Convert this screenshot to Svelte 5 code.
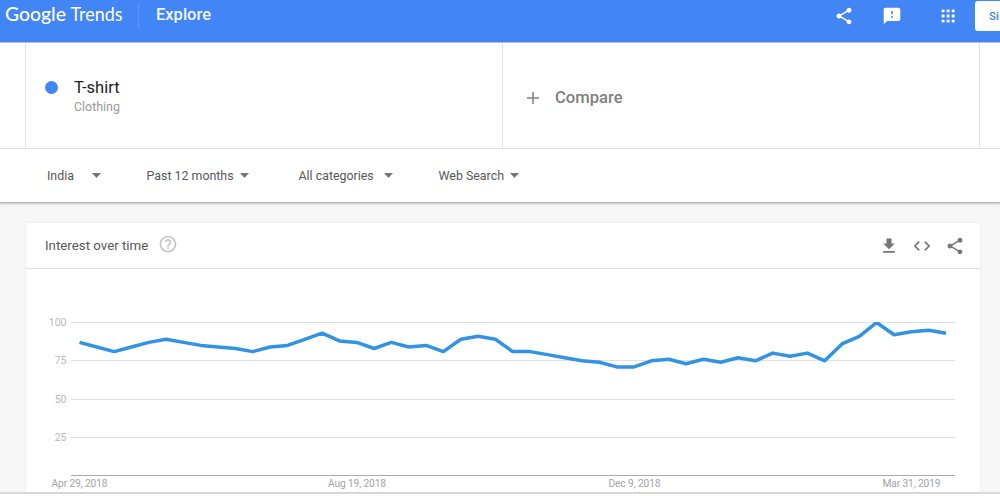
<script>
  const filters = [
    { label: 'India', width: 99.5, gap: 18 },
    { label: 'Past 12 months', width: 152, gap: 6 },
    { label: 'All categories', width: 140, gap: 10 },
    { label: 'Web Search', width: 100, gap: 6 }
  ];

  const values = [
    87, 84, 81, 84, 87, 89, 87, 85, 84, 83, 81, 84, 85, 89, 93, 88, 87,
    83, 87, 84, 85, 81, 89, 91, 89, 81, 81, 79, 77, 75, 74, 71, 71, 75,
    76, 73, 76, 74, 77, 75, 80, 78, 80, 75, 86, 91, 100, 92, 94, 95, 93
  ];

  const ticks = [100, 75, 50, 25];
  const dates = [
    { text: 'Apr 29, 2018', x: 25.5, width: 56 },
    { text: 'Aug 19, 2018', x: 302, width: 58 },
    { text: 'Dec 9, 2018', x: 582.5, width: 52 },
    { text: 'Mar 31, 2019', x: 856.5, width: 58 }
  ];

  const toY = (value) => 206.5 - value * 1.53;
  const points = values.map((v, i) => `${(53.5 + i * 17.33).toFixed(1)},${toY(v).toFixed(1)}`).join(' ');
</script>

{#snippet share(size)}
  <svg width={size} height={size} viewBox="0 0 24 24" fill="currentColor">
    <path d="M18 16.08c-.76 0-1.44.3-1.96.77L8.91 12.7c.05-.23.09-.46.09-.7s-.04-.47-.09-.7l7.05-4.11c.54.5 1.25.81 2.04.81 1.66 0 3-1.34 3-3s-1.34-3-3-3-3 1.34-3 3c0 .24.04.47.09.7L8.04 9.81C7.5 9.31 6.79 9 6 9c-1.66 0-3 1.34-3 3s1.34 3 3 3c.79 0 1.5-.31 2.04-.81l7.12 4.16c-.05.21-.08.43-.08.65 0 1.61 1.31 2.92 2.92 2.92s2.92-1.31 2.92-2.92-1.31-2.92-2.92-2.92z" />
  </svg>
{/snippet}

<div class="page">
  <header class="topbar">
    <svg class="logo" width="124" height="30" viewBox="0 0 124 30" fill="currentColor">
      <text class="google" x="5" y="21" textLength="61" lengthAdjust="spacingAndGlyphs">Google</text>
      <text class="trends" x="70.5" y="21" textLength="52" lengthAdjust="spacingAndGlyphs">Trends</text>
    </svg>
    <span class="divider"></span>
    <span class="section">Explore</span>
    <div class="actions">
      {@render share(20)}
      <svg class="feedback" width="20" height="20" viewBox="0 0 24 24" fill="currentColor">
        <path d="M20 2H4c-1.1 0-1.99.9-1.99 2L2 22l4-4h14c1.1 0 2-.9 2-2V4c0-1.1-.9-2-2-2zm-7 12h-2v-2h2v2zm0-4h-2V6h2v4z" />
      </svg>
      <svg class="apps" width="20" height="20" viewBox="0 0 24 24" fill="currentColor">
        <path d="M4.4 7.6h3.4V4.2H4.4v3.4zm6 12.2h3.4v-3.4h-3.4v3.4zm-6 0h3.4v-3.4H4.4v3.4zm0-6.1h3.4v-3.4H4.4v3.4zm6 0h3.4v-3.4h-3.4v3.4zm6.1-9.5v3.4h3.4V4.2h-3.4zm-6.1 3.4h3.4V4.2h-3.4v3.4zm6.1 6.1h3.4v-3.4h-3.4v3.4zm0 6.1h3.4v-3.4h-3.4v3.4z" />
      </svg>
      <button class="signin">Si</button>
    </div>
  </header>

  <section class="terms">
    <div class="term">
      <span class="dot"></span>
      <div>
        <div class="name">T-shirt</div>
        <div class="type">Clothing</div>
      </div>
    </div>
    <div class="compare">
      <svg width="12" height="12" viewBox="0 0 12 12" stroke="currentColor" stroke-width="1.5">
        <path d="M6 0v12M0 6h12" />
      </svg>
      <span>Compare</span>
    </div>
  </section>

  <nav class="filters">
    {#each filters as filter}
      <div class="filter" style="width: {filter.width}px; gap: {filter.gap}px">
        <span>{filter.label}</span>
        <svg width="9" height="5" viewBox="0 0 10 5" preserveAspectRatio="none" fill="currentColor"><path d="M0 0h10L5 5z" /></svg>
      </div>
    {/each}
  </nav>

  <main>
    <div class="card">
      <div class="card-header">
        <h2>Interest over time</h2>
        <svg class="help" width="20" height="20" viewBox="0 0 24 24" fill="currentColor">
          <path d="M11 18h2v-2h-2v2zm1-16C6.48 2 2 6.48 2 12s4.48 10 10 10 10-4.48 10-10S17.52 2 12 2zm0 18c-4.41 0-8-3.59-8-8s3.59-8 8-8 8 3.59 8 8-3.59 8-8 8zm0-14c-2.21 0-4 1.79-4 4h2c0-1.1.9-2 2-2s2 .9 2 2c0 2-3 1.75-3 5h2c0-2.25 3-2.5 3-5 0-2.21-1.79-4-4-4z" />
        </svg>
        <div class="tools">
          <svg width="20" height="20" viewBox="0 0 24 24" fill="currentColor">
            <path d="M19 9h-4V3H9v6H5l7 7 7-7zM5 18v2h14v-2H5z" />
          </svg>
          <svg width="20" height="20" viewBox="0 0 24 24" fill="currentColor">
            <path d="M9.4 16.6L4.8 12l4.6-4.6L8 6l-6 6 6 6 1.4-1.4zm5.2 0l4.6-4.6-4.6-4.6L16 6l6 6-6 6-1.4-1.4z" />
          </svg>
          {@render share(20)}
        </div>
      </div>

      <svg class="chart" width="954" height="223" viewBox="0 0 954 223">
        <clipPath id="plot"><rect x="45" y="53" width="885" height="160" /></clipPath>
        {#each ticks as tick}
          <line class="grid" x1="45" x2="929" y1={Math.floor(toY(tick)) + 0.5} y2={Math.floor(toY(tick)) + 0.5} />
          <text class="tick" x="40.5" y={toY(tick) + 3.5} text-anchor="end">{tick}</text>
        {/each}
        <line class="axis" x1="45" x2="929" y1="206.5" y2="206.5" />
        <polyline class="series" {points} clip-path="url(#plot)" />
        {#each dates as date}
          <text class="date" x={date.x} y="218" textLength={date.width}>{date.text}</text>
        {/each}
      </svg>
    </div>
  </main>
</div>

<style>
  :global(body) {
    background: #fff;
  }

  .page {
    width: 1000px;
    height: 496px;
    overflow: hidden;
    font-family: Roboto, sans-serif;
    color: #575757;
  }

  .topbar {
    display: flex;
    align-items: flex-start;
    box-sizing: border-box;
    height: 43px;
    background: #4285f4;
    border-bottom: 1px solid #b5bfdf;
    color: #fff;
  }

  .logo {
    flex: none;
    overflow: visible;
  }

  .google,
  .trends {
    font-family: Lato, sans-serif;
    font-size: 19px;
  }

  .google {
    font-weight: 500;
  }

  .divider {
    width: 1px;
    height: 26px;
    margin: 3px 17px 0 14px;
    background: #5c96f6;
  }

  .section {
    font-size: 16.5px;
    font-weight: 500;
    line-height: 30px;
    color: #f2f7ff;
  }

  .actions {
    display: flex;
    align-items: center;
    height: 32px;
    margin-left: auto;
  }

  .feedback {
    margin-left: 28px;
  }

  .apps {
    margin: 0 17px 0 36px;
  }

  .signin {
    width: 25px;
    height: 30px;
    padding: 0 0 0 14px;
    border: none;
    border-radius: 3px 0 0 3px;
    background: #fff;
    color: #4285d4;
    font: 500 11.5px Roboto, sans-serif;
    text-align: left;
    white-space: nowrap;
  }

  .terms {
    display: grid;
    grid-template-columns: 477px 477px;
    height: 105px;
    padding-left: 25px;
    border-bottom: 1px solid #e0e0e0;
  }

  .term,
  .compare {
    display: flex;
    box-sizing: border-box;
    border-left: 1px solid #e3e3e3;
  }

  .term {
    padding: 35px 0 0 19px;
  }

  .dot {
    width: 13px;
    height: 13px;
    margin: 3px 16px 0 0;
    border-radius: 50%;
    background: #4285f4;
  }

  .name {
    color: #212121;
    font-size: 16.5px;
    line-height: 20px;
  }

  .type {
    color: #999;
    font-size: 12.4px;
    line-height: 17px;
  }

  .compare {
    width: 478px;
    align-items: center;
    gap: 16px;
    padding: 4px 0 0 24px;
    border-right: 1px solid #e3e3e3;
    color: #808080;
    font-size: 16.6px;
    font-weight: 500;
  }

  .filters {
    display: flex;
    position: relative;
    align-items: center;
    height: 53px;
    padding-left: 47px;
    border-bottom: 1px solid #b5b5b5;
    box-shadow: 0 1px 2px rgba(0, 0, 0, 0.2);
    font-size: 12.4px;
  }

  .filter {
    display: flex;
    align-items: center;
    white-space: nowrap;
  }

  .filter svg {
    flex: none;
    color: #757575;
  }

  main {
    box-sizing: border-box;
    height: 291px;
    padding: 20px 20px 0 26px;
    background: #f6f6f6;
    border-bottom: 2px solid #dadada;
  }

  .card {
    width: 954px;
    height: 269px;
    background: #fff;
    box-shadow: 0 0 1px rgba(0, 0, 0, 0.14);
  }

  .card-header {
    display: flex;
    align-items: center;
    box-sizing: border-box;
    height: 46px;
    padding: 0 15px 0 19px;
    border-bottom: 1px solid #e0e0e0;
  }

  h2 {
    margin: 0;
    font-size: 13.3px;
    font-weight: 400;
  }

  .help {
    margin: 0 0 3px 10px;
    color: #c4c4c4;
  }

  .tools {
    display: flex;
    gap: 13px;
    margin-left: auto;
    color: #757575;
  }

  .chart {
    display: block;
  }

  .grid {
    stroke: #e0e0e0;
  }

  .axis {
    stroke: #ababab;
  }

  .series {
    fill: none;
    stroke: #3293e3;
    stroke-width: 3.5;
    stroke-linejoin: round;
  }

  .tick {
    fill: #b8b8b8;
    font-size: 10.5px;
  }

  .date {
    fill: #a3a3a3;
    font-size: 10.2px;
  }
</style>
